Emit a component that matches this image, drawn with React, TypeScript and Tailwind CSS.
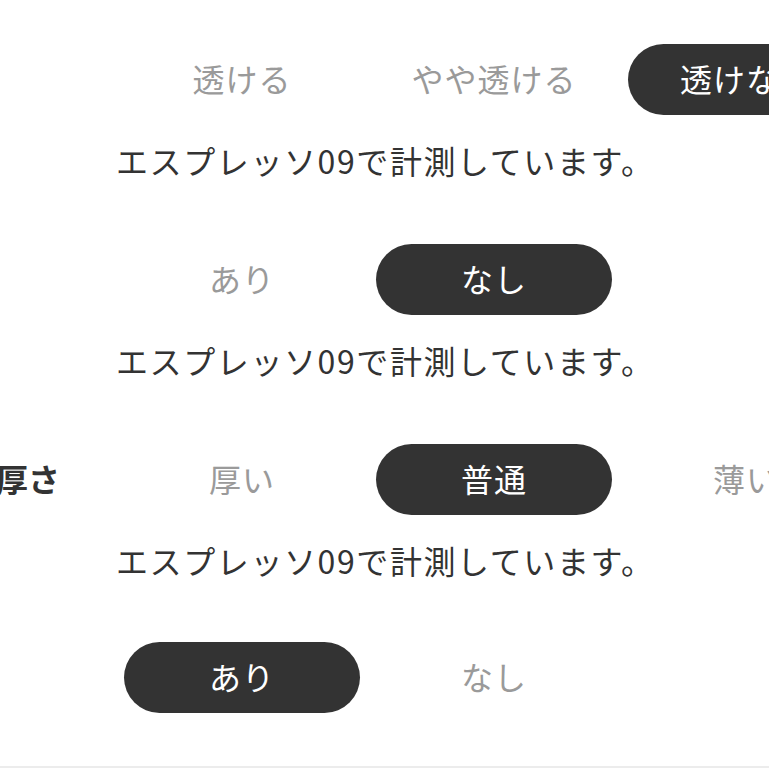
import React from 'react'

type Section = {
  label?: string
  options: string[]
  selected: number
  note?: boolean
  gap: string
}

const sections: Section[] = [
  { options: ['透ける', 'やや透ける', '透けない'], selected: 2, note: true, gap: 'mb-[60px]' },
  { options: ['あり', 'なし'], selected: 1, note: true, gap: 'mb-[60px]' },
  { label: '厚さ', options: ['厚い', '普通', '薄い'], selected: 1, note: true, gap: 'mb-[58px]' },
  { options: ['あり', 'なし'], selected: 0, gap: 'mb-[53px]' },
]

function Options({ options, selected }: { options: string[]; selected: number }) {
  return (
    <div className="flex gap-[16px] pl-[6px]">
      {options.map((o, i) => (
        <div
          key={o + i}
          className={
            i === selected
              ? 'flex h-[71px] w-[236px] shrink-0 items-center justify-center rounded-full bg-[#333333] pb-[3px] text-[32px] tracking-[1px] text-white'
              : 'flex h-[71px] w-[236px] shrink-0 items-center justify-center rounded-full pb-[3px] text-[32px] tracking-[1px] text-[#9a9a9a]'
          }
        >
          <span className="whitespace-nowrap">{o}</span>
        </div>
      ))}
    </div>
  )
}

export default function App() {
  return (
    <div
      className="h-[769px] w-[769px] overflow-hidden bg-white"
      style={{ fontFamily: '"Noto Sans CJK JP", "Noto Sans", sans-serif' }}
    >
      <div className="flex w-[900px] flex-col pt-[44px]">
        {sections.map((s, idx) => (
          <div key={idx} className={'flex ' + s.gap}>
            <div className="flex h-[71px] w-[118px] shrink-0 items-center justify-end pb-[3px] pr-[58px]">
              {s.label && (
                <span className="whitespace-nowrap text-[32px] font-bold text-[#333333]">{s.label}</span>
              )}
            </div>
            <div className="flex flex-col">
              <Options options={s.options} selected={s.selected} />
              {s.note && (
                <p className="-ml-[2px] mt-[21px] h-[48px] whitespace-nowrap text-[32px] leading-[48px] tracking-[1.6px] text-[#333333]">
                  エスプレッソ09で計測しています。
                </p>
              )}
            </div>
          </div>
        ))}
        <div className="h-[2px] w-full bg-[#ececec]" />
      </div>
    </div>
  )
}
